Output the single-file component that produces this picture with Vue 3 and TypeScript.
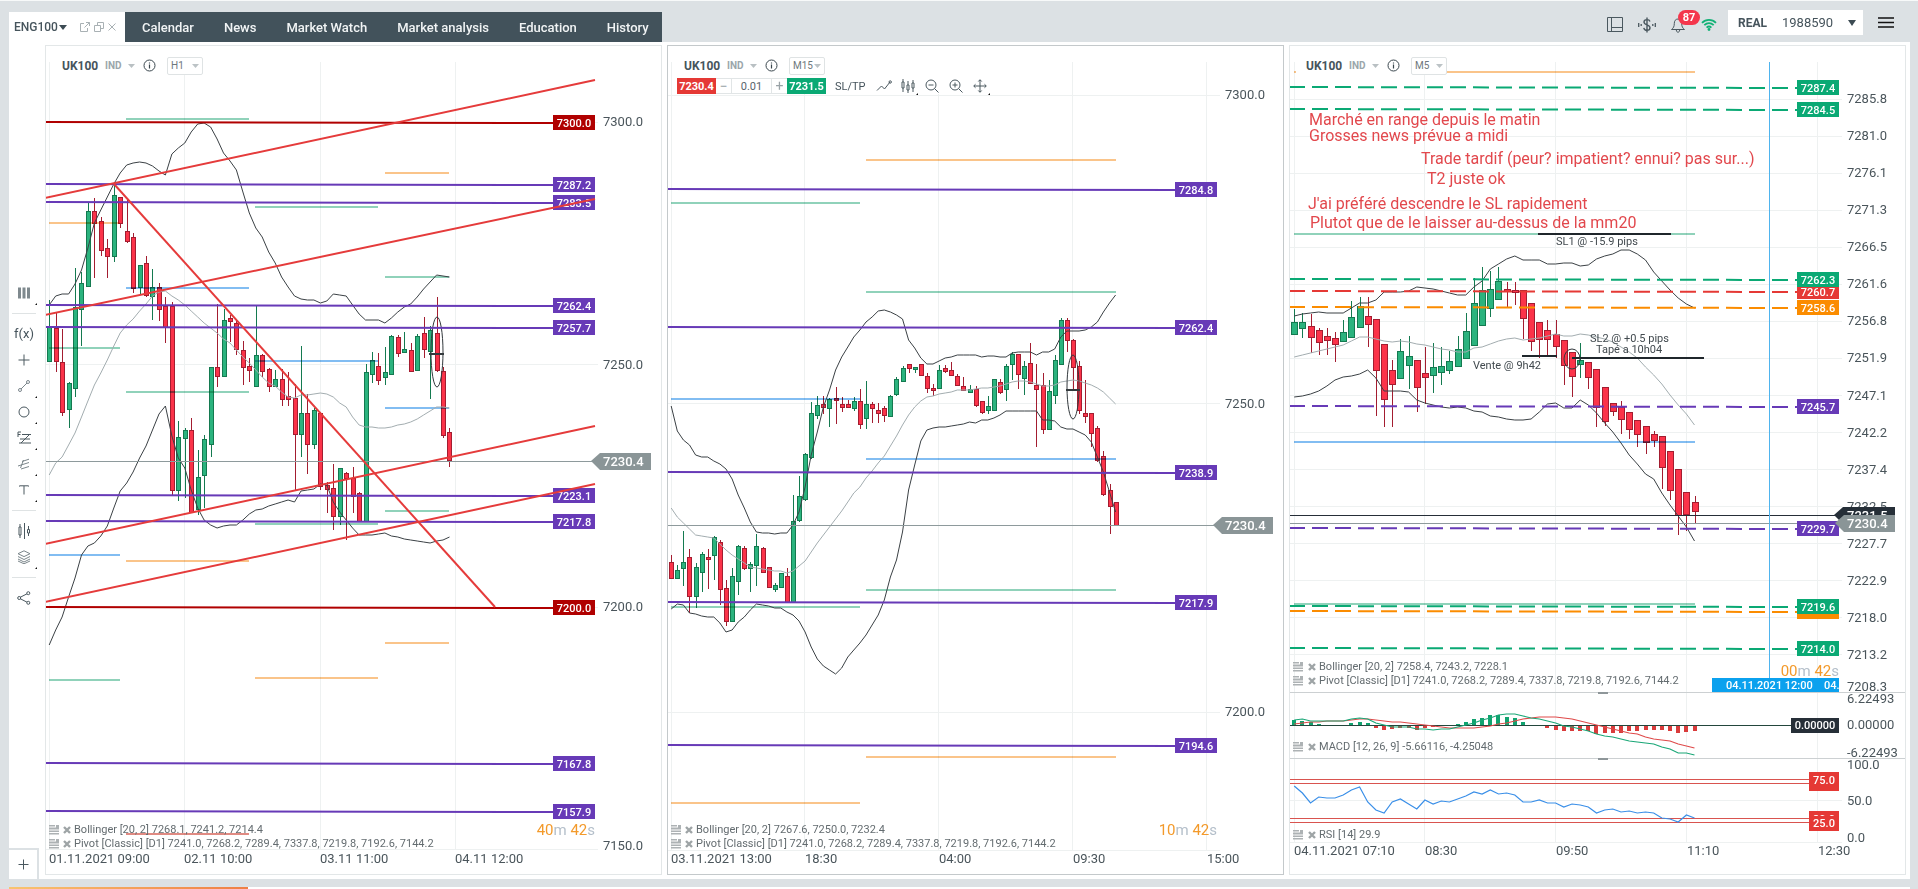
<script setup lang="ts">
type Candle = [up: number, high: number, top: number, bottom: number, low: number]
interface Label { at: number; text: string }
interface Level { y: number; text: string; color: string }
interface Chart {
  id: string
  interval: string
  active?: boolean
  trade?: boolean
  origin: number
  start: number
  step: number
  body: number
  floor: number
  xGrid: number[]
  yGrid: number[]
  xLabels: Label[]
  xLabelY: number
  yLabels: Label[]
  axis: number
  tagX: number
  dashed?: boolean
  levels: Level[]
  pivots: [number, number, number, string][]
  trends: [number, number, number, number][]
  candles: Candle[]
  bands: { color: string; ys: number[] }[]
  price: { y: number; text: string }
  timer: { minutes: string; y: number }
  notes: { y: number; text: string }[]
}

const DARK = '#3b4145'
const SOFT = '#a3adb0'
const VIOLET = '#673ab7'
const MAROON = '#b00000'
const GREEN = '#0aa974'
const RED = '#e53935'
const AMBER = '#fb8c00'
const MINT = '#90d2ba'
const SKY = '#82bdf2'
const PEACH = '#fac48a'

const tabs = ['Calendar', 'News', 'Market Watch', 'Market analysis', 'Education', 'History']
const pivotText = 'Pivot [Classic] [D1] 7241.0, 7268.2, 7289.4, 7337.8, 7219.8, 7192.6, 7144.2'

const charts: Chart[] = [
  {
    id: 'h1', interval: 'H1', origin: 46, start: 49.2, step: 6.456, body: 5, floor: 850,
    xGrid: [49, 184, 320, 455], yGrid: [122, 364, 607, 849],
    xLabels: [{ at: 49, text: '01.11.2021 09:00' }, { at: 184, text: '02.11 10:00' }, { at: 320, text: '03.11 11:00' }, { at: 455, text: '04.11 12:00' }],
    xLabelY: 863,
    yLabels: [{ at: 122, text: '7300.0' }, { at: 365, text: '7250.0' }, { at: 607, text: '7200.0' }, { at: 846, text: '7150.0' }],
    axis: 603, tagX: 553,
    levels: [
      { y: 123, text: '7300.0', color: MAROON }, { y: 185, text: '7287.2', color: VIOLET },
      { y: 203, text: '7283.5', color: VIOLET }, { y: 306, text: '7262.4', color: VIOLET },
      { y: 328, text: '7257.7', color: VIOLET }, { y: 496, text: '7223.1', color: VIOLET },
      { y: 522, text: '7217.8', color: VIOLET }, { y: 608, text: '7200.0', color: MAROON },
      { y: 764, text: '7167.8', color: VIOLET }, { y: 812, text: '7157.9', color: VIOLET },
    ],
    pivots: [
      [126, 249, 119, MINT], [385, 449, 173, PEACH], [255, 378, 207, MINT], [49, 120, 223, PEACH],
      [385, 449, 277, MINT], [126, 249, 288, SKY], [49, 120, 348, MINT], [126, 249, 392, MINT],
      [255, 378, 361, SKY], [385, 449, 408, SKY], [385, 449, 511, MINT], [255, 378, 524, MINT],
      [49, 120, 555, SKY], [126, 249, 561, PEACH], [385, 449, 643, PEACH], [49, 120, 680, MINT],
      [255, 378, 678, PEACH], [126, 249, 834, '#e08a82'],
    ],
    trends: [[45, 198, 595, 80], [45, 315, 595, 199], [45, 544, 595, 426], [45, 602, 595, 484], [114, 184, 495, 607]],
    candles: [
      [1, 300, 326, 361, 361], [0, 313, 328, 361, 372], [0, 329, 362, 412, 416], [1, 382, 383, 409, 428],
      [1, 268, 307, 388, 397], [1, 272, 283, 309, 346], [1, 202, 211, 286, 286], [0, 198, 211, 223, 278],
      [0, 217, 221, 250, 256], [0, 239, 248, 256, 278], [1, 184, 195, 256, 262], [0, 197, 197, 223, 228],
      [0, 198, 231, 241, 243], [0, 233, 237, 288, 293], [1, 265, 265, 287, 294], [0, 256, 263, 295, 297],
      [1, 269, 287, 296, 320], [0, 283, 287, 309, 321], [0, 297, 306, 327, 343], [0, 302, 306, 490, 495],
      [1, 421, 437, 490, 501], [1, 428, 430, 438, 498], [0, 418, 430, 512, 513], [1, 450, 477, 509, 515],
      [1, 435, 439, 475, 508], [1, 367, 367, 444, 457], [0, 304, 367, 376, 387], [1, 309, 320, 376, 377],
      [0, 315, 318, 321, 342], [0, 320, 323, 349, 355], [0, 341, 350, 367, 385], [0, 358, 366, 370, 382],
      [1, 305, 355, 386, 387], [0, 354, 355, 371, 377], [0, 368, 369, 386, 392], [1, 370, 379, 386, 387],
      [0, 369, 379, 399, 406], [0, 372, 396, 399, 406], [0, 384, 398, 434, 490], [1, 346, 413, 434, 457],
      [0, 394, 413, 444, 474], [1, 408, 410, 444, 449], [0, 412, 413, 486, 490], [0, 482, 485, 489, 513],
      [0, 464, 488, 516, 530], [1, 468, 468, 516, 525], [0, 472, 473, 478, 540], [0, 467, 478, 496, 513],
      [0, 492, 493, 521, 521], [1, 364, 372, 521, 521], [1, 352, 360, 374, 383], [0, 353, 366, 380, 385],
      [1, 347, 372, 377, 385], [1, 335, 336, 374, 374], [0, 335, 337, 353, 357], [1, 332, 349, 352, 353],
      [0, 343, 350, 371, 372], [1, 334, 336, 370, 371], [0, 317, 333, 349, 358], [1, 326, 330, 351, 399],
      [0, 297, 333, 370, 372], [0, 367, 371, 435, 438], [0, 428, 432, 460, 467],
    ],
    bands: [
      { color: DARK, ys: [305, 296, 294, 294, 284, 270, 248, 223, 210, 197, 184, 173, 165, 163, 162, 163, 166, 171, 175, 154, 148, 143, 132, 124, 123, 127, 139, 153, 161, 170, 192, 213, 228, 237, 252, 263, 277, 287, 296, 299, 300, 300, 303, 301, 294, 295, 296, 305, 314, 320, 320, 320, 323, 318, 312, 307, 304, 297, 289, 282, 275, 276, 277] },
      { color: SOFT, ys: [475, 463, 457, 445, 433, 417, 401, 385, 373, 360, 346, 333, 325, 319, 311, 304, 296, 292, 291, 296, 300, 305, 311, 317, 323, 328, 333, 339, 343, 350, 357, 363, 370, 377, 383, 386, 392, 397, 398, 395, 395, 394, 393, 394, 397, 403, 407, 417, 425, 427, 427, 428, 428, 427, 425, 424, 422, 419, 415, 411, 407, 407, 408] },
      { color: DARK, ys: [645, 630, 617, 597, 578, 555, 546, 543, 536, 526, 508, 491, 483, 472, 458, 446, 430, 414, 406, 436, 458, 468, 490, 508, 520, 525, 528, 526, 525, 525, 520, 514, 510, 509, 506, 504, 502, 500, 502, 491, 490, 489, 484, 485, 502, 512, 520, 528, 535, 535, 535, 534, 533, 536, 537, 539, 540, 541, 542, 543, 541, 540, 537] },
    ],
    price: { y: 461, text: '7230.4' },
    timer: { minutes: '40', y: 835 },
    notes: [{ y: 830, text: 'Bollinger [20, 2] 7268.1, 7241.2, 7214.4' }, { y: 844, text: pivotText }],
  },
  {
    id: 'm15', interval: 'M15', active: true, trade: true, origin: 668, start: 671.2, step: 6.088, body: 5, floor: 850,
    xGrid: [671, 804, 938, 1072, 1206], yGrid: [95, 403, 712, 850],
    xLabels: [{ at: 671, text: '03.11.2021 13:00' }, { at: 805, text: '18:30' }, { at: 939, text: '04:00' }, { at: 1073, text: '09:30' }, { at: 1207, text: '15:00' }],
    xLabelY: 863,
    yLabels: [{ at: 95, text: '7300.0' }, { at: 404, text: '7250.0' }, { at: 712, text: '7200.0' }],
    axis: 1225, tagX: 1175,
    levels: [
      { y: 190, text: '7284.8', color: VIOLET }, { y: 328, text: '7262.4', color: VIOLET },
      { y: 473, text: '7238.9', color: VIOLET }, { y: 603, text: '7217.9', color: VIOLET },
      { y: 746, text: '7194.6', color: VIOLET },
    ],
    pivots: [
      [866, 1116, 160, PEACH], [671, 860, 203, MINT], [866, 1116, 292, MINT], [671, 860, 399, SKY],
      [866, 1116, 459, SKY], [866, 1116, 590, MINT], [671, 860, 607, MINT], [866, 1116, 757, PEACH],
      [671, 860, 803, PEACH],
    ],
    trends: [],
    candles: [
      [0, 555, 562, 578, 579], [1, 565, 570, 578, 579], [1, 531, 562, 568, 586], [0, 549, 557, 596, 613],
      [1, 563, 567, 596, 608], [1, 552, 554, 572, 592], [0, 549, 557, 559, 589], [1, 536, 537, 555, 580],
      [0, 540, 542, 589, 605], [0, 580, 588, 621, 626], [1, 568, 576, 621, 621], [1, 545, 546, 581, 595],
      [0, 546, 548, 568, 570], [1, 562, 564, 568, 592], [1, 534, 546, 565, 586], [0, 547, 548, 572, 573],
      [0, 567, 567, 587, 587], [1, 583, 585, 589, 592], [1, 573, 573, 587, 588], [0, 568, 576, 602, 602],
      [1, 495, 521, 602, 602], [1, 476, 496, 520, 522], [1, 453, 454, 499, 501], [1, 402, 413, 457, 459],
      [1, 396, 405, 415, 419], [0, 396, 404, 407, 414], [1, 398, 399, 408, 427], [0, 387, 398, 400, 424],
      [0, 397, 404, 407, 412], [0, 400, 404, 407, 408], [1, 397, 401, 408, 411], [0, 389, 401, 424, 429],
      [1, 381, 404, 418, 429], [0, 402, 404, 408, 423], [0, 403, 410, 413, 423], [0, 406, 408, 415, 422],
      [1, 395, 396, 416, 417], [1, 377, 379, 394, 396], [1, 366, 368, 381, 382], [0, 364, 364, 368, 373],
      [1, 367, 367, 369, 373], [0, 364, 364, 375, 375], [0, 373, 376, 388, 393], [0, 384, 388, 390, 396],
      [1, 365, 370, 388, 388], [0, 365, 368, 371, 373], [0, 362, 370, 375, 376], [0, 374, 376, 385, 386],
      [0, 377, 386, 390, 391], [1, 385, 389, 392, 393], [0, 386, 389, 405, 407], [0, 401, 401, 412, 414],
      [1, 396, 406, 410, 414], [1, 379, 379, 410, 410], [0, 379, 382, 392, 394], [1, 364, 366, 389, 401],
      [1, 352, 354, 364, 380], [0, 354, 354, 374, 389], [1, 361, 366, 378, 395], [0, 343, 363, 383, 384],
      [0, 364, 385, 389, 447], [0, 373, 385, 429, 434], [1, 380, 391, 429, 429], [1, 355, 360, 395, 404],
      [1, 318, 320, 364, 365], [0, 318, 320, 340, 352], [0, 339, 340, 367, 391], [0, 361, 366, 410, 414],
      [0, 380, 413, 416, 423], [0, 413, 413, 433, 447], [0, 426, 428, 460, 462], [0, 451, 456, 494, 496],
      [0, 484, 490, 506, 534], [0, 502, 502, 525, 526],
    ],
    bands: [
      { color: DARK, ys: [406, 431, 440, 445, 455, 457, 457, 461, 464, 469, 479, 495, 508, 522, 532, 533, 533, 534, 533, 533, 525, 512, 487, 455, 432, 407, 390, 370, 357, 347, 337, 330, 322, 317, 311, 310, 312, 315, 319, 340, 348, 358, 364, 364, 361, 358, 357, 355, 355, 355, 355, 357, 356, 356, 357, 357, 353, 352, 352, 352, 355, 352, 352, 349, 337, 331, 331, 331, 330, 327, 322, 312, 303, 295] },
      { color: SOFT, ys: [508, 517, 523, 529, 535, 536, 537, 538, 544, 550, 555, 559, 563, 567, 568, 569, 570, 571, 571, 573, 571, 566, 561, 552, 543, 535, 527, 519, 511, 502, 493, 487, 478, 471, 463, 456, 446, 436, 425, 415, 407, 401, 397, 396, 394, 393, 392, 390, 390, 390, 389, 388, 388, 387, 386, 384, 382, 381, 381, 382, 384, 386, 386, 385, 382, 381, 380, 381, 383, 385, 388, 392, 398, 404] },
      { color: DARK, ys: [609, 604, 605, 613, 614, 616, 617, 617, 623, 632, 630, 622, 617, 610, 604, 605, 606, 608, 608, 612, 615, 621, 632, 647, 659, 666, 670, 674, 668, 657, 650, 643, 635, 625, 615, 600, 577, 560, 532, 490, 465, 441, 430, 428, 427, 427, 426, 425, 424, 422, 423, 420, 420, 418, 415, 411, 411, 411, 411, 411, 411, 420, 420, 421, 427, 429, 429, 432, 435, 442, 457, 472, 492, 512] },
    ],
    price: { y: 525, text: '7230.4' },
    timer: { minutes: '10', y: 835 },
    notes: [{ y: 830, text: 'Bollinger [20, 2] 7267.6, 7250.0, 7232.4' }, { y: 844, text: pivotText }],
  },
  {
    id: 'm5', interval: 'M5', origin: 1290, start: 1294.2, step: 8.17, body: 7, floor: 842,
    xGrid: [1294, 1424, 1555, 1686, 1817],
    yGrid: [99, 136, 173, 210, 247, 284, 321, 358, 395, 432, 469, 506, 543, 580, 617, 654, 800, 842],
    xLabels: [{ at: 1294, text: '04.11.2021 07:10' }, { at: 1425, text: '08:30' }, { at: 1556, text: '09:50' }, { at: 1687, text: '11:10' }, { at: 1818, text: '12:30' }],
    xLabelY: 855,
    yLabels: [
      { at: 99, text: '7285.8' }, { at: 136, text: '7281.0' }, { at: 173, text: '7276.1' }, { at: 210, text: '7271.3' },
      { at: 247, text: '7266.5' }, { at: 284, text: '7261.6' }, { at: 321, text: '7256.8' }, { at: 358, text: '7251.9' },
      { at: 396, text: '7247.1' }, { at: 433, text: '7242.2' }, { at: 470, text: '7237.4' }, { at: 507, text: '7232.5' },
      { at: 544, text: '7227.7' }, { at: 581, text: '7222.9' }, { at: 618, text: '7218.0' }, { at: 655, text: '7213.2' },
      { at: 687, text: '7208.3' }, { at: 699, text: '6.22493' }, { at: 725, text: '0.00000' }, { at: 753, text: '-6.22493' },
      { at: 765, text: '100.0' }, { at: 801, text: '50.0' }, { at: 838, text: '0.0' },
    ],
    axis: 1847, tagX: 1797, dashed: true,
    levels: [
      { y: 88, text: '7287.4', color: GREEN }, { y: 110, text: '7284.5', color: GREEN },
      { y: 292, text: '7260.7', color: RED }, { y: 280, text: '7262.3', color: GREEN },
      { y: 308, text: '7258.6', color: AMBER }, { y: 407, text: '7245.7', color: VIOLET },
      { y: 529, text: '7229.7', color: VIOLET }, { y: 612, text: '', color: AMBER },
      { y: 607, text: '7219.6', color: GREEN }, { y: 649, text: '7214.0', color: GREEN },
    ],
    pivots: [[1294, 1695, 72, PEACH], [1294, 1695, 234, MINT], [1294, 1695, 442, SKY], [1294, 1695, 604, MINT]],
    trends: [],
    candles: [
      [1, 309, 322, 334, 335], [1, 313, 322, 328, 338], [0, 314, 326, 337, 353], [0, 328, 330, 342, 355],
      [0, 328, 336, 340, 355], [0, 332, 338, 344, 362], [1, 320, 332, 341, 342], [1, 301, 317, 337, 338],
      [1, 297, 306, 327, 328], [0, 297, 316, 324, 347], [0, 319, 319, 370, 416], [0, 344, 344, 399, 427],
      [0, 360, 370, 384, 427], [1, 339, 351, 378, 379], [1, 336, 356, 365, 389], [0, 360, 360, 387, 412],
      [0, 347, 373, 377, 404], [1, 343, 367, 375, 393], [1, 347, 366, 372, 385], [1, 351, 361, 370, 374],
      [1, 336, 349, 366, 367], [1, 313, 331, 358, 359], [1, 278, 303, 345, 346], [1, 267, 290, 325, 326],
      [1, 271, 289, 308, 317], [1, 267, 281, 299, 300], [0, 282, 289, 291, 308], [0, 282, 290, 292, 305],
      [0, 290, 290, 318, 339], [0, 303, 303, 341, 351], [0, 322, 322, 339, 358], [0, 320, 330, 339, 356],
      [0, 320, 334, 346, 358], [0, 340, 340, 365, 385], [0, 352, 352, 376, 397], [1, 343, 360, 364, 378],
      [0, 362, 362, 377, 389], [0, 369, 369, 407, 427], [0, 387, 387, 421, 426], [0, 403, 403, 411, 416],
      [0, 401, 407, 419, 434], [0, 412, 412, 429, 439], [0, 420, 420, 434, 447], [0, 426, 426, 442, 454],
      [0, 431, 434, 440, 447], [0, 436, 436, 467, 489], [0, 451, 451, 490, 500], [0, 469, 469, 515, 535],
      [0, 492, 492, 514, 531], [0, 496, 502, 511, 523],
    ],
    bands: [
      { color: DARK, ys: [316, 314, 313, 312, 313, 313, 313, 308, 303, 303, 300, 292, 292, 292, 291, 287, 288, 289, 291, 293, 295, 295, 287, 281, 269, 264, 259, 256, 260, 260, 260, 264, 264, 263, 263, 266, 265, 259, 256, 254, 250, 250, 254, 260, 272, 281, 290, 298, 304, 308] },
      { color: SOFT, ys: [357, 355, 353, 351, 349, 347, 345, 341, 337, 337, 339, 341, 342, 341, 342, 344, 345, 347, 349, 350, 352, 352, 348, 347, 344, 341, 339, 338, 340, 339, 338, 336, 334, 336, 336, 334, 335, 337, 339, 342, 347, 352, 358, 367, 375, 384, 395, 405, 414, 425] },
      { color: DARK, ys: [397, 396, 394, 391, 386, 380, 377, 376, 374, 370, 378, 391, 391, 391, 392, 400, 403, 405, 407, 408, 407, 408, 411, 412, 416, 417, 419, 420, 420, 419, 412, 404, 403, 408, 408, 400, 405, 413, 423, 432, 443, 455, 464, 474, 479, 493, 505, 516, 527, 541] },
    ],
    price: { y: 523, text: '7230.4' },
    timer: { minutes: '00', y: 676 },
    notes: [
      { y: 667, text: 'Bollinger [20, 2] 7258.4, 7243.2, 7228.1' }, { y: 681, text: pivotText },
      { y: 747, text: 'MACD [12, 26, 9] -5.66116, -4.25048' }, { y: 835, text: 'RSI [14] 29.9' },
    ],
  },
]

const histogram = [5, 4, 3, 1, 0, 0, 0, 2, 3, 2, -3, -5, -4, -3, -3, -5, -3, -2, -1, 0, 1, 3, 6, 7, 10, 10, 8, 7, 3, 0, -1, -3, -5, -6, -6, -6, -6, -9, -8, -8, -8, -6, -6, -5, -5, -5, -6, -8, -7, -6]
const macd = [720, 719, 721, 721, 721, 721, 721, 719, 718, 719, 723, 725, 727, 727, 727, 729, 729, 730, 729, 729, 727, 725, 723, 720, 718, 715, 714, 714, 716, 718, 719, 721, 723, 726, 727, 729, 731, 734, 736, 737, 739, 741, 742, 743, 744, 747, 749, 753, 753, 755]
const signal = [724, 723, 722, 722, 721, 721, 721, 720, 719, 719, 720, 721, 722, 722, 723, 724, 725, 726, 727, 728, 728, 728, 728, 727, 726, 724, 723, 721, 719, 718, 717, 717, 717, 718, 719, 721, 723, 725, 727, 729, 731, 733, 734, 737, 739, 740, 741, 744, 746, 748]
const rsi = [786, 793, 803, 797, 798, 798, 795, 790, 787, 802, 810, 813, 802, 799, 804, 809, 800, 804, 801, 802, 799, 796, 792, 794, 790, 794, 793, 795, 802, 802, 800, 803, 803, 807, 804, 805, 807, 813, 810, 809, 812, 811, 813, 812, 813, 818, 819, 822, 815, 818]

const remarks = [
  { x: 1309, y: 125, text: 'Marché en range depuis le matin' },
  { x: 1309, y: 141, text: 'Grosses news prévue a midi' },
  { x: 1421, y: 164, text: 'Trade tardif (peur? impatient? ennui? pas sur...)' },
  { x: 1427, y: 184, text: 'T2 juste ok' },
  { x: 1308, y: 209, text: "J'ai préféré descendre le SL rapidement" },
  { x: 1310, y: 228, text: 'Plutot que de le laisser au-dessus de la mm20' },
]
const tradeNotes = [
  { x: 1556, y: 245, text: 'SL1 @ -15.9 pips' },
  { x: 1590, y: 342, text: 'SL2 @ +0.5 pips' },
  { x: 1596, y: 353, text: 'Tapé a 10h04' },
  { x: 1473, y: 369, text: 'Vente @ 9h42' },
]

const xAt = (c: Chart, i: number) => Math.round(c.start + c.step * i)
const path = (c: Chart, ys: number[]) => ys.map((y, i) => `${(c.start + c.step * i).toFixed(1)},${y}`).join(' ')
</script>

<template>
  <div class="app">
    <header class="topbar">
      <div class="workspace">
        <button class="symbol" type="button">ENG100<svg width="8" height="5" viewBox="0 0 8 5"><path d="M0 0h8L4 5z" fill="#3c4b53" /></svg></button>
        <button class="win" type="button" aria-label="Detach"><svg width="10" height="10" viewBox="0 0 10 10"><path d="M4 1.500H.5v8h7V6M6 .5h3.500v3.500M9.500 .5L4.500 5.500" /></svg></button>
        <button class="win" type="button" aria-label="Restore"><svg width="10" height="10" viewBox="0 0 10 10"><path d="M.5 3.500h6v6h-6zM3.500 3V.5h6v6H7" /></svg></button>
        <button class="win" type="button" aria-label="Close"><svg width="8" height="8" viewBox="0 0 8 8"><path d="M.5 .5l7 7M7.500 .5l-7 7" /></svg></button>
      </div>
      <nav class="tabs"><a v-for="t in tabs" :key="t" href="#">{{ t }}</a></nav>
      <div class="status">
        <button type="button" aria-label="Layout"><svg width="16" height="15" viewBox="0 0 16 15" class="ink"><path d="M.5 .5h15v14H.5zM4.500 .5v14M4.500 10.500h11" /></svg></button>
        <button class="deposit" type="button" aria-label="Deposit"><svg width="18" height="16" viewBox="0 0 18 16" class="ink"><path d="M12 4.500C11.500 3 10.500 2.600 9 2.600 7.200 2.600 6 3.600 6 5c0 3.600 6 2 6 5.700 0 1.500-1.200 2.600-3 2.600-1.700 0-2.900-.8-3.200-2.500M9 .5v15" stroke-width="1.400" /><path d="M.7 6v4M3.200 7v2M17.300 6v4M14.800 7v2" stroke-width="1.300" /></svg></button>
        <button class="bell" type="button" aria-label="Notifications">
          <svg width="14" height="16" viewBox="0 0 14 16" class="ink"><path d="M7 2C4.400 2 3.300 4 3.300 6.500c0 3-.9 4.600-2.800 6h13c-1.900-1.400-2.800-3-2.800-6C10.700 4 9.600 2 7 2zM5.300 13c.2 1.600.8 2.200 1.700 2.200S8.500 14.600 8.700 13" /></svg>
          <span class="badge">87</span>
        </button>
        <svg class="wifi" width="16" height="13" viewBox="0 0 16 13"><path d="M1 4.800C5 .8 11 .8 15 4.800M3.300 7.200c2.800-2.700 6.600-2.700 9.400 0M5.600 9.600c1.500-1.400 3.300-1.400 4.800 0" fill="none" stroke="#12b176" stroke-width="1.800" /><circle cx="8" cy="11.500" r="1.400" fill="#12b176" /></svg>
        <button class="account" type="button"><b>REAL</b><span>1988590</span><svg width="8" height="6" viewBox="0 0 8 6"><path d="M0 0h8L4 6z" fill="#3c4b53" /></svg></button>
        <button class="menu" type="button" aria-label="Menu"><svg width="16" height="11" viewBox="0 0 16 11"><path d="M0 1h16M0 5.500h16M0 10h16" stroke="#111" stroke-width="1.300" /></svg></button>
      </div>
    </header>

    <main class="desk">
      <aside class="rail">
        <div class="tools">
          <button type="button" class="more" aria-label="Watchlist"><svg width="12" height="12" viewBox="0 0 12 12"><path d="M0 .5h3v11H0zM4.500 .5h3v11h-3zM9 .5h3v11H9z" fill="#7f898e" /></svg></button>
          <hr />
          <button type="button" class="fx">f(x)</button>
          <button type="button" aria-label="Crosshair"><svg class="ink" width="12" height="12" viewBox="0 0 12 12"><path d="M6 .5v11M.5 6h11" /></svg></button>
          <button type="button" class="more" aria-label="Trend line"><svg class="ink soft" width="12" height="12" viewBox="0 0 12 12"><path d="M3 9l6-6" /><circle cx="2" cy="10" r="1.500" /><circle cx="10" cy="2" r="1.500" /></svg></button>
          <button type="button" class="more" aria-label="Ellipse"><svg class="ink" width="12" height="12" viewBox="0 0 12 12"><circle cx="6" cy="6" r="5" /></svg></button>
          <button type="button" class="more" aria-label="Fibonacci"><svg class="ink" width="14" height="13" viewBox="0 0 14 13"><path d="M1 6V1h3M1 3.500h2.500M5 3.500h9M3 8h10M2 12h12M12.500 3.500L4 12" /></svg></button>
          <button type="button" class="more" aria-label="Pitchfork"><svg class="ink soft" width="12" height="12" viewBox="0 0 12 12"><path d="M0 8l11-3.500M4 3.500l7-2.300M3 11l8-2.500M5.500 2L2.500 10" /></svg></button>
          <button type="button" class="more" aria-label="Text"><svg class="ink" width="10" height="10" viewBox="0 0 10 10"><path d="M.5 1.500V.8h9v.7M5 1v8.500" /></svg></button>
          <hr />
          <button type="button" aria-label="Chart type"><svg class="ink" width="12" height="16" viewBox="0 0 12 16"><path d="M1 4h2v8H1zM2 1v3M2 12v3M6.500 0v16M9.500 6.500h2v3.500h-2zM10.500 3v3.500M10.500 10v3" /></svg></button>
          <button type="button" class="more" aria-label="Layers"><svg class="ink soft" width="14" height="14" viewBox="0 0 14 14"><path d="M7 .8l6 2.900-6 2.900-6-2.900zM1 6.500l6 3 6-3M1 9l6 3 6-3M1 11l6 2.800 6-2.800" /></svg></button>
          <hr />
          <button type="button" aria-label="Share"><svg class="ink" width="14" height="14" viewBox="0 0 14 14"><path d="M3.200 6.300l6.800-3.500M3.200 7.700l6.800 3.500" /><circle cx="2.200" cy="7" r="1.500" /><circle cx="11.300" cy="2.200" r="1.500" /><circle cx="11.300" cy="11.800" r="1.500" /></svg></button>
        </div>
        <button type="button" class="add" aria-label="Add"><svg class="ink" width="11" height="11" viewBox="0 0 11 11"><path d="M5.500 .5v10M.5 5.500h10" /></svg></button>
      </aside>

      <div class="panels">
        <section v-for="c in charts" :key="c.id" class="panel" :class="{ active: c.active }">
          <div class="controls">
            <div class="row">
              <button type="button" class="ticker"><b>UK100</b><span>IND</span><svg width="7" height="4" viewBox="0 0 7 4"><path d="M0 0h7L3.500 4z" fill="#b9c0c3" /></svg></button>
              <button type="button" class="info" aria-label="Info"><svg width="13" height="13" viewBox="0 0 13 13"><circle cx="6.500" cy="6.500" r="5.500" fill="none" stroke="#39464d" /><path d="M6.500 5.500v4M6.500 3.500v1" stroke="#39464d" stroke-width="1.200" /></svg></button>
              <label class="interval">
                <select aria-label="Interval"><option>{{ c.interval }}</option></select>
                <svg width="7" height="4" viewBox="0 0 7 4"><path d="M0 0h7L3.500 4z" fill="#bcc3c6" /></svg>
              </label>
            </div>
            <div v-if="c.trade" class="row trade">
              <button type="button" class="sell">7230.4</button>
              <div class="volume">
                <button type="button">−</button>
                <input type="text" value="0.01" aria-label="Volume" />
                <button type="button">+</button>
              </div>
              <button type="button" class="buy">7231.5</button>
              <button type="button" class="sltp">SL/TP</button>
              <button type="button" class="glyph" aria-label="Line tool"><svg class="ink" width="16" height="12" viewBox="0 0 16 12"><path d="M1 10.500L5.500 6l3 3L14 2" /><circle cx="14.200" cy="2" r="1.200" /></svg></button>
              <button type="button" class="glyph more" aria-label="Candles"><svg class="ink" width="14" height="14" viewBox="0 0 14 14"><path d="M1 3h2v6H1zM2 0v3M2 9v4M6 6h2v5H6zM7 2v4M7 11v3M11 4h2v5h-2zM12 1v3M12 9v4" /></svg></button>
              <button type="button" class="glyph" aria-label="Zoom out"><svg class="ink" width="14" height="14" viewBox="0 0 14 14"><circle cx="6" cy="6" r="5" /><path d="M9.600 9.600L13.500 13.500M3.500 6h5" /></svg></button>
              <button type="button" class="glyph" aria-label="Zoom in"><svg class="ink" width="14" height="14" viewBox="0 0 14 14"><circle cx="6" cy="6" r="5" /><path d="M9.600 9.600L13.500 13.500M3.500 6h5M6 3.500v5" /></svg></button>
              <button type="button" class="glyph more" aria-label="Move"><svg class="ink" width="14" height="14" viewBox="0 0 14 14"><path d="M7 1v12M1 7h12M5.300 2.500L7 .7l1.700 1.800M5.300 11.500L7 13.300l1.700-1.800M2.500 5.300L.7 7l1.800 1.700M11.500 5.300L13.300 7l-1.800 1.700" /></svg></button>
            </div>
          </div>

          <svg class="plot" :viewBox="`${c.origin} 46 615 828`">
            <g class="grid">
              <line v-for="x in c.xGrid" :key="'v' + x" :x1="x" :x2="x" y1="62" :y2="c.floor" />
              <line v-for="y in c.yGrid" :key="'h' + y" :x1="c.origin" :x2="c.axis - 5" :y1="y" :y2="y" />
            </g>

            <template v-if="c.id === 'm5'">
              <g class="crisp">
                <rect v-for="(h, i) in histogram" :key="i" :x="xAt(c, i) - 2" :y="h > 0 ? 725 - h : 725" width="4" :height="Math.abs(h)" :fill="h > 0 ? '#10a36f' : '#d93b3b'" />
                <rect x="1290" y="725" width="502" height="1" fill="#23463c" />
                <rect x="1290" y="779" width="520" height="1" fill="#d9534f" />
                <rect x="1290" y="783" width="520" height="1" fill="#d9534f" />
                <rect x="1290" y="818" width="520" height="1" fill="#d9534f" />
                <rect x="1290" y="822" width="520" height="1" fill="#d9534f" />
                <rect x="1290" y="692" width="615" height="1" fill="#ccd0d2" />
                <rect x="1290" y="758" width="615" height="1" fill="#ccd0d2" />
                <rect x="1598" y="692" width="10" height="2" fill="#8e9699" />
                <rect x="1598" y="758" width="10" height="2" fill="#8e9699" />
              </g>
              <polyline :points="path(c, signal)" fill="none" stroke="#df4a4a" stroke-width="1.200" />
              <polyline :points="path(c, macd)" fill="none" stroke="#1aa777" stroke-width="1.200" />
              <polyline :points="path(c, rsi)" fill="none" stroke="#3a8fe8" stroke-width="1.200" />
            </template>

            <g class="crisp">
              <template v-for="([up, high, top, bottom, low], i) in c.candles" :key="i">
                <rect :x="xAt(c, i)" :y="high" width="1" :height="low - high" :class="up ? 'wick-up' : 'wick-down'" />
                <rect :x="xAt(c, i) - (c.body - 1) / 2" :y="top" :width="c.body" :height="bottom - top + 1" :class="up ? 'wick-up' : 'wick-down'" />
                <rect :x="xAt(c, i) - (c.body - 3) / 2" :y="top + 1" :width="c.body - 2" :height="Math.max(bottom - top - 1, 1)" :class="up ? 'body-up' : 'body-down'" />
              </template>
            </g>

            <rect v-for="([x1, x2, y, color], i) in c.pivots" :key="'p' + i" class="pivot" :x="x1" :y="y - 1" :width="x2 - x1" height="2" :fill="color" />
            <polyline v-for="(b, i) in c.bands" :key="'b' + i" class="band" :points="path(c, b.ys)" :stroke="b.color" />

            <line :x1="c.origin" :x2="c.axis - 4" :y1="c.price.y" :y2="c.price.y" stroke="#8e9a9c" class="crisp" />
            <g v-if="c.id === 'm5'">
              <rect x="1290" y="515" width="552" height="1" fill="#262e38" />
              <rect x="1538" y="233" width="133" height="2" fill="#1f262b" />
              <rect x="1522" y="355" width="35" height="2" fill="#1f262b" />
              <rect x="1572" y="357" width="132" height="2" fill="#1f262b" />
              <ellipse class="ring" cx="1572" cy="359" rx="8" ry="10" />
              <rect x="1769" y="62" width="1" height="616" fill="#4fb4ee" />
            </g>
            <g v-if="c.id === 'h1'">
              <ellipse class="ring" cx="437" cy="352" rx="6" ry="35" />
              <rect x="429" y="353" width="15" height="2" fill="#33393d" />
            </g>
            <g v-if="c.id === 'm15'">
              <ellipse class="ring" cx="1073" cy="387" rx="6" ry="32" />
              <rect x="1066" y="389" width="14" height="2" fill="#33393d" />
            </g>

            <g v-for="(l, i) in c.levels" :key="'l' + i">
              <line :x1="c.origin - 1" :x2="c.tagX" :y1="l.y - 1" :y2="l.y" :stroke="l.color" stroke-width="2" :stroke-dasharray="c.dashed ? '16 7' : undefined" />
              <rect :x="c.tagX" :y="l.y - 8" width="42" height="15" :fill="l.color" />
              <text class="tag" :x="c.tagX + 21" :y="l.y + 4">{{ l.text }}</text>
            </g>

            <line v-for="([x1, y1, x2, y2], i) in c.trends" :key="'t' + i" :x1="x1" :y1="y1" :x2="x2" :y2="y2" stroke="#e53b3b" stroke-width="2" />

            <text v-for="l in c.yLabels" :key="l.text" class="axis" :x="c.axis" :y="l.at + 4">{{ l.text }}</text>
            <text v-for="l in c.xLabels" :key="l.text" class="axis" :x="l.at" :y="c.xLabelY">{{ l.text }}</text>

            <g v-if="c.id === 'm5'">
              <path d="M1834 515l9-8h52v17h-52z" fill="#262f38" />
              <text class="price" x="1847" y="520">7231.5</text>
              <rect x="1791" y="718" width="48" height="15" fill="#262f38" />
              <text class="tag" x="1815" y="729">0.00000</text>
              <rect x="1809" y="776" width="30" height="15" fill="#e53935" />
              <rect x="1809" y="772" width="30" height="15" fill="#e53935" />
              <text class="tag" x="1824" y="784">75.0</text>
              <rect x="1809" y="811" width="30" height="15" fill="#e53935" />
              <text class="tag" x="1824" y="823">30.0</text>
              <rect x="1809" y="816" width="30" height="15" fill="#e53935" />
              <text class="tag" x="1824" y="827">25.0</text>
              <rect x="1712" y="678" width="127" height="14" fill="#0ba1ee" />
              <text class="date" x="1726" y="689">04.11.2021 12:00</text>
              <text class="date" x="1824" y="689">04.</text>
              <text v-for="r in remarks" :key="r.text" class="remark" :x="r.x" :y="r.y">{{ r.text }}</text>
              <text v-for="n in tradeNotes" :key="n.text" class="note" :x="n.x" :y="n.y">{{ n.text }}</text>
            </g>

            <path :d="`M${c.axis - 12} ${c.price.y}l9-8h51v17h-51z`" fill="#8a9597" />
            <text class="price" :x="c.axis" :y="c.price.y + 5">{{ c.price.text }}</text>
            <text class="timer" :x="c.tagX + 42" :y="c.timer.y">{{ c.timer.minutes }}<tspan class="unit">m </tspan>42<tspan class="unit">s</tspan></text>

            <g v-for="n in c.notes" :key="n.text">
              <path :transform="`translate(${c.xGrid[0] - (c.id === 'm5' ? 1 : 0)} ${n.y - 5})`" d="M0 0h6v1.500H0zM7 0h3v3.500H7zM0 2.500h10v2H0zM0 5.500h10V7H0zM0 8h10v1.500H0z" fill="#adb2b4" />
              <path :transform="`translate(${c.xGrid[0] + 14} ${n.y - 4})`" d="M1 1l6 6M7 1L1 7" stroke="#9ea4a6" stroke-width="2.400" />
              <text class="indicator" :x="c.xGrid[0] + 25" :y="n.y + 3">{{ n.text }}</text>
            </g>
          </svg>
        </section>
      </div>
    </main>
    <footer class="loader"><span></span></footer>
  </div>
</template>

<style>
body { margin: 0; background: #dce1e4; }
</style>

<style scoped>
.app {
  box-sizing: border-box;
  padding: 0 8px 0 9px;
  border-top: 1px solid #f7f9f9;
  background: #dce1e4;
  color: #46545c;
  font-family: Roboto, "Liberation Sans", sans-serif;
  font-size: 12px;
}
button, select, input { padding: 0; border: 0; background: none; color: inherit; font: inherit; }
button { display: inline-flex; align-items: center; justify-content: center; cursor: pointer; }
.ink { fill: none; stroke: #4a585f; stroke-width: 1; }
.soft { stroke: #7c878c; }

.topbar { display: flex; height: 41px; align-items: flex-end; }
.workspace { display: flex; width: 116px; height: 30px; align-items: center; gap: 4px; background: #fff; }
.symbol { margin: 0 9px 0 5px; gap: 1px; font-size: 12px; font-weight: 500; }
.win svg { fill: none; stroke: #a9b1b4; }
.tabs { display: flex; height: 30px; align-items: center; gap: 30px; padding: 0 13px 0 17px; background: #42525b; }
.tabs a { color: #f1f4f5; font-size: 13px; font-weight: 500; text-decoration: none; white-space: nowrap; }
.status { display: flex; height: 36px; flex: 1; align-items: flex-start; justify-content: flex-end; }
.status > button, .status > .wifi { height: 25px; margin-top: 6px; }
.status > button:nth-child(-n + 2) { margin-right: 15px; }
.status > .deposit { margin-right: 12px; }
.status .bell { position: relative; margin-right: 16px; }
.badge {
  position: absolute; top: -2px; left: 7px; width: 22px; height: 15px; border-radius: 8px;
  background: #f4364c; color: #fff; font-size: 11px; font-weight: 700; line-height: 15px; text-align: center;
}
.status .account {
  box-sizing: border-box; width: 135px; margin: 4px 15px 0 11px; justify-content: flex-start;
  gap: 15px; padding-left: 10px; background: #fff; font-size: 13px;
}
.account b { font-size: 12px; font-weight: 700; }
.status .menu { margin: 4px 16px 0 0; }

.desk { display: flex; background: #fff; }
.rail { display: flex; width: 36px; flex-direction: column; }
.tools { display: flex; flex: 1; flex-direction: column; justify-content: center; }
.tools button { height: 26px; margin-right: 6px; }
.tools hr { width: 24px; height: 1px; margin: 7px 9px 7px 3px; border: 0; background: #dfe3e4; }
.fx { font-size: 13px; }
.more { position: relative; }
.more::after {
  position: absolute; right: 2px; bottom: 1px; border: 1px solid #111; border-top-color: transparent;
  border-left-color: transparent; content: "";
}
.add { width: 30px; height: 31px; box-sizing: border-box; border: solid #dce1e4; border-width: 2px 2px 0 0; }

.panels { display: grid; flex: 1; grid-template-columns: repeat(3, minmax(0, 1fr)); gap: 5px; padding: 3px 4px 4px 0; }
.panel { display: grid; align-items: start; border: 1px solid #e3e7e8; background: #fff; }
.panel.active { border-color: #c4c9cb; }
.controls, .plot { grid-area: 1 / 1; }
.controls { z-index: 1; justify-self: start; margin: 11px 0 0 6px; background: #fff; }
.plot { display: block; width: 100%; height: auto; overflow: hidden; }
.row { display: flex; height: 17px; align-items: center; }
.row .ticker { margin-left: 10px; }
.ticker b { width: 43px; font-size: 12px; font-weight: 700; text-align: left; }
.ticker span { width: 23px; color: #9ba6ab; font-size: 10px; font-weight: 700; text-align: left; }
.info { margin: 0 11px 0 8px; }
.interval { display: grid; box-sizing: border-box; width: 36px; height: 18px; align-items: center; border: 1px solid #dfe3e4; border-radius: 2px; }
.interval select { grid-area: 1 / 1; width: 100%; padding-left: 3px; appearance: none; color: #6e787d; font-size: 10px; }
.interval svg { grid-area: 1 / 1; justify-self: end; margin-right: 3px; pointer-events: none; }
.trade { height: 16px; margin: 4px 0 0 3px; }
.sell, .buy { width: 39px; height: 16px; background: #e53935; color: #fff; font-size: 11px; font-weight: 700; }
.buy { background: #0aa974; }
.volume { display: flex; box-sizing: border-box; width: 71px; height: 16px; border: solid #e1e5e6; border-width: 1px 0; }
.volume button { width: 16px; color: #9aa3a7; font-size: 14px; }
.volume input { width: 39px; border: solid #e1e5e6; border-width: 0 1px; color: #59656b; font-size: 11px; text-align: center; }
.sltp { margin: 0 6px 0 9px; font-size: 11px; }
.glyph { width: 24px; height: 18px; }
.glyph.more::after { right: 2px; bottom: 0; }

.grid line { stroke: #eef1f1; shape-rendering: crispEdges; }
.crisp { shape-rendering: crispEdges; }
.wick-up { fill: #147a50; }
.wick-down { fill: #a31d30; }
.body-up { fill: #2bb37e; }
.body-down { fill: #fb3349; }
.pivot { mix-blend-mode: multiply; }
.band { fill: none; stroke-width: 1; }
.ring { fill: none; stroke: #33393d; }
.axis { fill: #4a555b; font-size: 13px; }
.tag { fill: #fff; font-size: 11px; font-weight: 500; text-anchor: middle; }
.price { fill: #fff; font-size: 13px; font-weight: 500; }
.date { fill: #fff; font-size: 11px; font-weight: 500; }
.timer { fill: #f39a2b; font-size: 15px; text-anchor: end; }
.unit { fill: #b4bfca; }
.indicator { fill: #646c70; font-size: 11px; }
.remark { fill: #e2484d; font-size: 16px; }
.note { fill: #41494e; font-size: 11px; }

.loader { height: 2px; margin-top: 8px; background: #fff; }
.loader span { display: block; width: 239px; height: 2px; background: linear-gradient(90deg, #f8c471, #ef7f45); }
</style>
